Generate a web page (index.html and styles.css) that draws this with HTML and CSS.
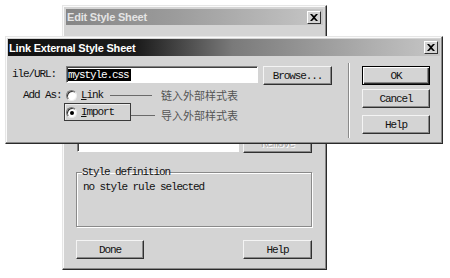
FILE: index.html
```html
<!DOCTYPE html>
<html>
<head>
<meta charset="utf-8">
<link rel="stylesheet" href="styles.css">
</head>
<body>
<div class="desk">
  <div class="win back">
    <div class="title inactive">
      <span class="title-text">Edit Style Sheet</span>
      <span class="close"><svg width="8" height="7" viewBox="0 0 8 7"><path d="M0 0h2l2 2 2-2h2L5 3.5 8 7H6L4 5 2 7H0l3-3.5z" fill="#000"/></svg></span>
    </div>
    <div class="back-body">
      <div class="list-row">
        <div class="listbox"></div>
        <div class="btn dis mono">Remove</div>
      </div>
      <fieldset class="group mono">
        <legend>Style definition</legend>
        <div class="def">no style rule selected</div>
      </fieldset>
      <div class="foot">
        <div class="btn mono w67">Done</div>
        <div class="btn mono w69">Help</div>
      </div>
    </div>
  </div>

  <div class="win front">
    <div class="title active">
      <span class="title-text">Link External Style Sheet</span>
      <span class="close"><svg width="8" height="7" viewBox="0 0 8 7"><path d="M0 0h2l2 2 2-2h2L5 3.5 8 7H6L4 5 2 7H0l3-3.5z" fill="#000"/></svg></span>
    </div>
    <div class="front-body mono">
      <div class="left">
        <div class="row1">
          <span class="lbl">ile/URL:</span>
          <span class="input"><span class="sel">mystyle.css</span></span>
          <span class="btn browse">Browse...</span>
        </div>
        <div class="row2">
          <span class="lbl2">Add As:</span>
          <span class="opt"><span class="radio"></span><span><u>L</u>ink</span></span>
          <span class="line l1"></span>
          <span class="cn">链入外部样式表</span>
        </div>
        <div class="row3">
          <span class="lbl2"></span>
          <span class="opt box"><span class="radio on"></span><span><u>I</u>mport</span></span>
          <span class="note"><span class="line l2"></span><span class="cn">导入外部样式表</span></span>
        </div>
      </div>
      <div class="sep"></div>
      <div class="right">
        <div class="btn def-btn">OK</div>
        <div class="btn cancel">Cancel</div>
        <div class="btn help">Help</div>
      </div>
    </div>
  </div>
</div>
</body>
</html>
```

FILE: styles.css
```css
* { box-sizing: border-box; }
html, body { margin: 0; padding: 0; background: #fff; }
.desk { position: relative; width: 450px; height: 278px; overflow: hidden; background: #fff; }

.mono {
  font-family: "Liberation Mono", "Courier New", monospace;
  font-size: 11px;
  line-height: 12px;
  letter-spacing: -1.1px;
  color: #111;
}

.win {
  position: absolute;
  background: #d4d4d4;
  border: 1px solid;
  border-color: #e6e6e6 #2a2a2a #2a2a2a #e6e6e6;
  box-shadow: inset -1px -1px 0 #8a8a8a, inset 1px 1px 0 #fafafa;
  padding: 3px;
  display: flex;
  flex-direction: column;
}
.back { left: 62px; top: 5px; width: 265px; height: 265px; }
.front { left: 5px; top: 36px; width: 438px; height: 108px; padding: 2px; }

.title {
  height: 16px;
  display: flex;
  align-items: center;
  justify-content: space-between;
  padding: 0 2px 0 1px;
  font-family: "Liberation Sans", Arial, sans-serif;
  font-weight: bold;
  font-size: 11px;
  letter-spacing: -0.2px;
}
.title.inactive { background: linear-gradient(90deg, #868686, #9a9a9a 40%, #c6c6c6); color: #e4e4e4; }
.title.active { height: 17px; background: linear-gradient(90deg, #111 0%, #1c1c1c 30%, #7a7a7a 52%, #b0b0b0 85%, #c6c6c6 100%); color: #fff; }
.close {
  width: 14px; height: 13px;
  background: #d4d4d4;
  border: 1px solid;
  border-color: #fff #303030 #303030 #fff;
  display: flex; align-items: center; justify-content: center;
}

.btn {
  height: 19px;
  background: #d4d4d4;
  border: 1px solid;
  border-color: #f4f4f4 #303030 #303030 #f4f4f4;
  box-shadow: inset -1px -1px 0 #888;
  display: flex; align-items: center; justify-content: center;
  font-family: "Liberation Mono", "Courier New", monospace;
  font-size: 11px;
  letter-spacing: -1.1px;
  color: #111;
}
.btn.dis { color: #aaa; text-shadow: 1px 1px 0 #fff; }

/* back dialog */
.back-body { flex: 1; padding: 0 11px 0 10px; display: flex; flex-direction: column; }
.list-row { display: flex; height: 128px; align-items: flex-end; }
.listbox {
  width: 162px; height: 112px;
  margin-left: 1px; margin-bottom: 1px;
  background: #fff;
  border: 1px solid; border-color: #808080 #fff #fff #808080;
  box-shadow: inset 1px 1px 0 #404040;
}
.list-row .btn { width: 69px; height: 19px; margin-left: 4px; }
.group {
  margin: 13px 0 0 0;
  padding: 0 6px;
  height: 61px;
  border: 1px solid #8a8a8a;
  box-shadow: inset 1px 1px 0 #fff, 1px 1px 0 #fff;
}
.group legend { padding: 0; margin-left: -1px; }
.def { margin-top: 3px; }
.foot { display: flex; justify-content: space-between; margin-top: 13px; }
.w67 { width: 68px; }
.w69 { width: 69px; }

/* front dialog */
.front-body { display: flex; padding: 10px 10px 0 4px; }
.left { width: 320px; }
.row1 { display: flex; align-items: flex-start; height: 19px; }
.lbl { width: 54px; line-height: 17px; }
.input {
  width: 192px; height: 17px;
  background: #fff;
  border: 1px solid; border-color: #808080 #fff #fff #808080;
  box-shadow: inset 1px 1px 0 #404040;
  padding: 2px 0 0 1px;
}
.sel { background: #000; color: #fff; display: inline-block; height: 12px; padding-right: 2px; }
.browse { width: 69px; margin-left: 5px; }

.row2 { display: flex; align-items: center; height: 14px; margin-top: 3px; }
.row3 { display: flex; align-items: center; height: 18px; margin-top: 1px; }
.lbl2 { width: 52px; padding-left: 11px; }
.opt { width: 46px; display: flex; align-items: center; padding-left: 2px; gap: 4px; }
.opt.box { width: 67px; height: 18px; border: 1px solid #3a3a3a; box-shadow: inset 1px 1px 0 #eee; padding-left: 1px; }
.radio {
  width: 11px; height: 11px; border-radius: 50%;
  background: #fff;
  border: 1px solid; border-color: #7a7a7a #eee #eee #7a7a7a;
  box-shadow: inset 1px 1px 0 #333;
  position: relative; flex: none;
}
.radio.on::after {
  content: ""; position: absolute; left: 3px; top: 3px;
  width: 4px; height: 4px; border-radius: 50%; background: #000;
}
.line { height: 1px; background: #6a6a6a; flex: none; }
.l1 { width: 42px; }
.l2 { width: 24px; }
.cn {
  font-family: "Noto Sans CJK SC", sans-serif;
  font-size: 11px; letter-spacing: 0; color: #555; line-height: 12px;
  margin-left: 9px;
}
.note { display: flex; align-items: center; padding-top: 6px; }
.note .cn { margin-left: 6px; }

.sep {
  width: 2px; height: 75px; margin: -3px 12px 0 16px;
  border-left: 1px solid #8a8a8a; border-right: 1px solid #fff;
}
.right { width: 68px; display: flex; flex-direction: column; }
.right .btn { height: 19px; }
.def-btn { border: 1px solid #000; box-shadow: inset 1px 1px 0 #fff, inset -1px -1px 0 #303030, inset -2px -2px 0 #888; }
.cancel { margin-top: 4px; }
.help { margin-top: 7px; }
```
